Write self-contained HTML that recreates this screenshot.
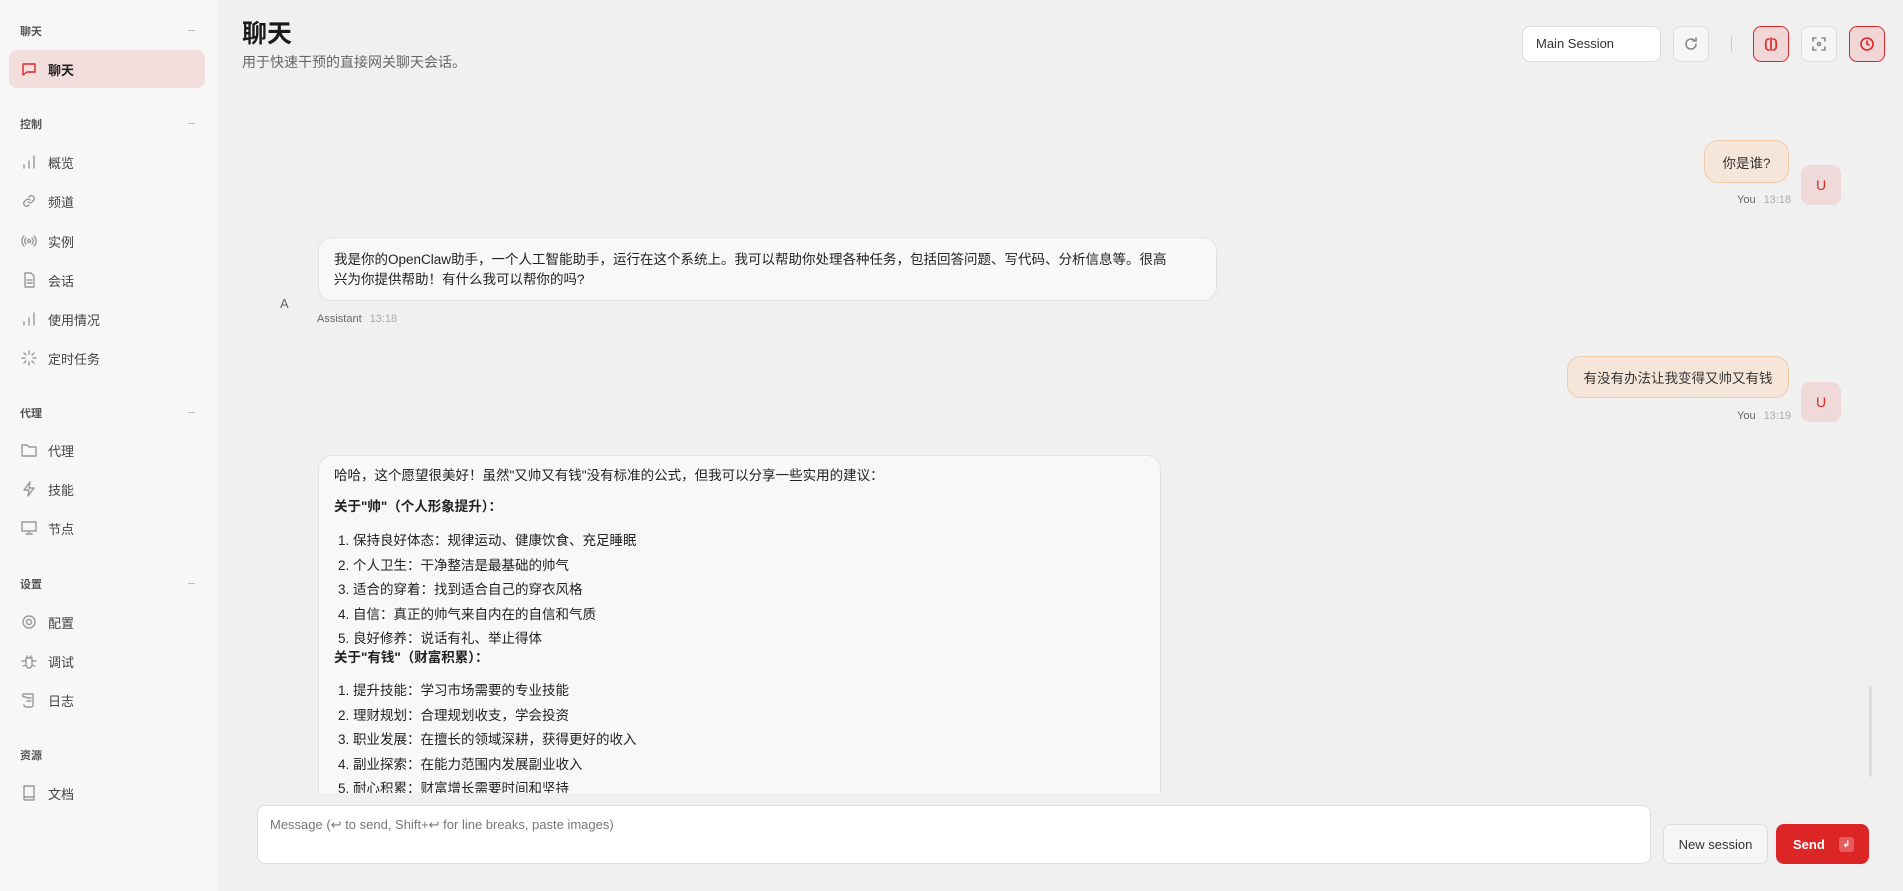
<!DOCTYPE html>
<html><head><meta charset="utf-8"><style>
*{box-sizing:border-box;margin:0;padding:0}
body{width:1903px;height:891px;overflow:hidden;background:#f0f0f0;font-family:"Liberation Sans","Noto Sans CJK SC",sans-serif;color:#333;position:relative}
.side{position:absolute;left:0;top:0;width:217px;height:891px;background:#f7f7f7}
.lbl{position:absolute;left:20px;font-size:11px;color:#555;font-weight:bold}
.dash{position:absolute;left:188px;width:7px;height:1px;background:#bbb}
.item{position:absolute;left:9px;width:196px;height:38px;border-radius:8px;font-size:13px;color:#444;display:flex;align-items:center;padding-left:12px}
.item svg{width:16px;height:16px;margin-right:11px;fill:none;stroke:#999;stroke-width:1.4;stroke-linecap:round;stroke-linejoin:round}
.item.act{background:#f3dede;color:#222;font-weight:bold}
.item.act svg{stroke:#dc2626}
.abs{position:absolute}
.btn{position:absolute;top:26px;width:36px;height:36px;border-radius:8px;border:1px solid #ddd;background:#f6f6f6;display:flex;align-items:center;justify-content:center}
.btn.red{border-color:#dc2626;background:#f0d6d6}
.btn svg{width:16px;height:16px;fill:none;stroke-width:1.6;stroke-linecap:round}
.ub{position:absolute;background:#f6e6da;border:1px solid #f0c9a8;border-radius:14px;font-size:13.5px;color:#333;display:flex;align-items:center;justify-content:center}
.av{position:absolute;width:40px;height:40px;border-radius:9px;background:#efd9d9;color:#dc2626;font-size:14px;display:flex;align-items:center;justify-content:center}
.meta{position:absolute;font-size:11px;color:#666}
.meta span{color:#aaa;margin-left:8px}
.ab{position:absolute;background:#f8f8f8;border:1px solid #e2e2e2;border-radius:14px;font-size:13.5px;color:#222;white-space:nowrap}
.ln{position:absolute;left:15px;line-height:20px}
</style></head><body>
<div class="side">
<div class="lbl" style="top:23px">聊天</div><div class="dash" style="top:30px"></div>
<div class="item act" style="top:50px"><svg viewBox="0 0 16 16"><path d="M2 3h12v8H6l-4 3z"/></svg>聊天</div>
<div class="lbl" style="top:116px">控制</div><div class="dash" style="top:123px"></div>
<div class="item" style="top:143px"><svg viewBox="0 0 16 16"><path d="M3 14v-3M8 14V7M13 14V2"/></svg>概览</div>
<div class="item" style="top:182px"><svg viewBox="0 0 16 16"><path d="M7 9a3 3 0 0 0 4 0l2-2a3 3 0 0 0-4-4l-1 1M9 7a3 3 0 0 0-4 0L3 9a3 3 0 0 0 4 4l1-1"/></svg>频道</div>
<div class="item" style="top:222px"><svg viewBox="0 0 16 16"><circle cx="8" cy="8" r="1.5"/><path d="M5 5a4 4 0 0 0 0 6M11 5a4 4 0 0 1 0 6M3 3a7 7 0 0 0 0 10M13 3a7 7 0 0 1 0 10"/></svg>实例</div>
<div class="item" style="top:261px"><svg viewBox="0 0 16 16"><path d="M4 1h6l3 3v11H4zM6 8h5M6 11h5"/></svg>会话</div>
<div class="item" style="top:300px"><svg viewBox="0 0 16 16"><path d="M3 14v-3M8 14V7M13 14V2"/></svg>使用情况</div>
<div class="item" style="top:339px"><svg viewBox="0 0 16 16"><path d="M8 1v3M8 12v3M1 8h3M12 8h3M3 3l2 2M11 11l2 2M3 13l2-2M11 5l2-2"/></svg>定时任务</div>
<div class="lbl" style="top:405px">代理</div><div class="dash" style="top:412px"></div>
<div class="item" style="top:431px"><svg viewBox="0 0 16 16"><path d="M1 3h5l2 2h7v9H1z"/></svg>代理</div>
<div class="item" style="top:470px"><svg viewBox="0 0 16 16"><path d="M9 1L3 9h5l-1 6 6-8H8z"/></svg>技能</div>
<div class="item" style="top:509px"><svg viewBox="0 0 16 16"><path d="M1 2h14v9H1zM8 11v3M5 14h6"/></svg>节点</div>
<div class="lbl" style="top:576px">设置</div><div class="dash" style="top:583px"></div>
<div class="item" style="top:603px"><svg viewBox="0 0 16 16"><circle cx="8" cy="8" r="2.5"/><circle cx="8" cy="8" r="6"/></svg>配置</div>
<div class="item" style="top:642px"><svg viewBox="0 0 16 16"><path d="M5 5h6v7a3 3 0 0 1-6 0zM6 3l1 2M10 3l-1 2M1 8h4M11 8h4M2 13l3-1M14 13l-3-1"/></svg>调试</div>
<div class="item" style="top:681px"><svg viewBox="0 0 16 16"><path d="M3 2h9v11a2 2 0 0 1-2 2H5M3 2a1 1 0 0 0 0 3h2M6 6h4M6 9h4M5 15a2 2 0 0 1-2-2"/></svg>日志</div>
<div class="lbl" style="top:747px">资源</div>
<div class="item" style="top:774px"><svg viewBox="0 0 16 16"><path d="M3 1h10v14H4a1 1 0 0 1-1-1zM3 12h10"/></svg>文档</div>
</div>

<div class="abs" style="left:242px;top:14px;font-size:25px;font-weight:bold;color:#1a1a1a">聊天</div>
<div class="abs" style="left:242px;top:52px;font-size:14px;color:#666">用于快速干预的直接网关聊天会话。</div>

<div class="abs" style="left:1522px;top:26px;width:139px;height:36px;border:1px solid #ddd;border-radius:8px;background:#fff;font-size:13px;color:#333;padding:9px 13px">Main Session</div>
<div class="btn" style="left:1673px"><svg viewBox="0 0 16 16" stroke="#888"><path d="M13 8a5 5 0 1 1-1.5-3.5M13 2v3h-3"/></svg></div>
<div class="abs" style="left:1731px;top:36px;width:1px;height:16px;background:#ccc"></div>
<div class="btn red" style="left:1753px"><svg viewBox="0 0 16 16" stroke="#dc2626"><path d="M8 2v12M6 3a3 3 0 0 0-3 4 3 3 0 0 0 0 3 3 3 0 0 0 3 4M10 3a3 3 0 0 1 3 4 3 3 0 0 1 0 3 3 3 0 0 1-3 4"/></svg></div>
<div class="btn" style="left:1801px"><svg viewBox="0 0 16 16" stroke="#888"><path d="M2 5V2h3M11 2h3v3M14 11v3h-3M5 14H2v-3"/><circle cx="8" cy="8" r="1.5"/></svg></div>
<div class="btn red" style="left:1849px"><svg viewBox="0 0 16 16" stroke="#dc2626"><circle cx="8" cy="8" r="6"/><path d="M8 5v3l2 1"/></svg></div>

<div class="ub" style="left:1704px;top:140px;width:85px;height:43px">你是谁?</div>
<div class="av" style="left:1801px;top:165px">U</div>
<div class="meta" style="left:1737px;top:194px">You<span>13:18</span></div>

<div class="ab" style="left:318px;top:237px;width:899px;height:64px"><div class="ln" style="top:12px">我是你的OpenClaw助手，一个人工智能助手，运行在这个系统上。我可以帮助你处理各种任务，包括回答问题、写代码、分析信息等。很高<br>兴为你提供帮助！有什么我可以帮你的吗?</div></div>
<div class="abs" style="left:280px;top:296px;font-size:13px;color:#666">A</div>
<div class="meta" style="left:317px;top:313px">Assistant<span>13:18</span></div>

<div class="ub" style="left:1567px;top:356px;width:222px;height:42px">有没有办法让我变得又帅又有钱</div>
<div class="av" style="left:1801px;top:382px">U</div>
<div class="meta" style="left:1737px;top:410px">You<span>13:19</span></div>

<div class="abs" style="left:318px;top:455px;width:843px;height:338px;overflow:hidden">
<div class="ab" style="left:0;top:0;width:843px;height:400px">
<div class="ln" style="top:10px">哈哈，这个愿望很美好！虽然"又帅又有钱"没有标准的公式，但我可以分享一些实用的建议：</div>
<div class="ln" style="top:41px;font-weight:bold">关于"帅"（个人形象提升）：</div>
<div class="ln" style="top:73px;left:19px;line-height:24.5px">1. 保持良好体态：规律运动、健康饮食、充足睡眠<br>2. 个人卫生：干净整洁是最基础的帅气<br>3. 适合的穿着：找到适合自己的穿衣风格<br>4. 自信：真正的帅气来自内在的自信和气质<br>5. 良好修养：说话有礼、举止得体</div>
<div class="ln" style="top:192px;font-weight:bold">关于"有钱"（财富积累）：</div>
<div class="ln" style="top:223px;left:19px;line-height:24.5px">1. 提升技能：学习市场需要的专业技能<br>2. 理财规划：合理规划收支，学会投资<br>3. 职业发展：在擅长的领域深耕，获得更好的收入<br>4. 副业探索：在能力范围内发展副业收入<br>5. 耐心积累：财富增长需要时间和坚持</div>
</div></div>
<div class="abs" style="left:1869px;top:686px;width:3px;height:91px;background:#ddd;border-radius:2px"></div>

<div class="abs" style="left:257px;top:805px;width:1394px;height:59px;background:#fff;border:1px solid #ddd;border-radius:8px;font-size:13px;color:#777;padding:11px 12px">Message (↩ to send, Shift+↩ for line breaks, paste images)</div>
<div class="abs" style="left:1663px;top:824px;width:105px;height:40px;border:1px solid #ddd;border-radius:8px;background:#f6f6f6;font-size:13px;color:#333;display:flex;align-items:center;justify-content:center">New session</div>
<div class="abs" style="left:1776px;top:824px;width:93px;height:40px;border-radius:8px;background:#dc2626;color:#fff;font-size:13px;font-weight:bold;display:flex;align-items:center;padding-left:17px">Send<span style="margin-left:14px;width:15px;height:15px;border-radius:3px;background:rgba(255,255,255,.25);font-size:9px;display:flex;align-items:center;justify-content:center">↲</span></div>
</body></html>
